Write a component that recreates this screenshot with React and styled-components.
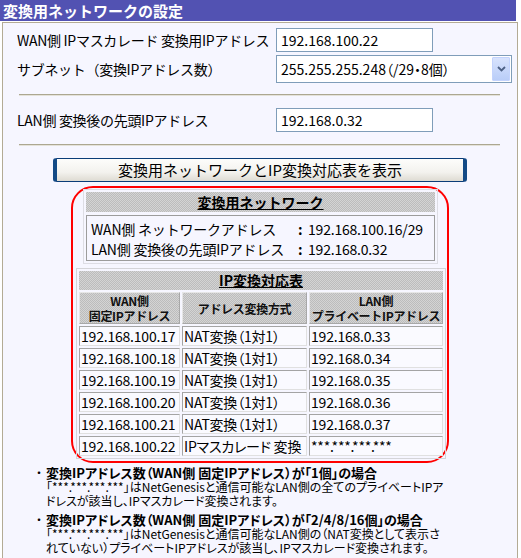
import styled, { createGlobalStyle } from "styled-components";

const GlobalStyle = createGlobalStyle`
  body {
    margin: 0;
    background: #ffffff;
  }
`;

const Page = styled.div`
  width: 521px;
  height: 558px;
  overflow: hidden;
  font-family: "Noto Sans CJK JP", "Noto Sans", sans-serif;
  color: #000;
`;

const Title = styled.h1`
  margin: 0;
  width: 516px;
  height: 21px;
  box-sizing: border-box;
  padding-left: 3px;
  background: #5252b2;
  color: #fff;
  font-size: 15px;
  font-weight: bold;
  line-height: 21px;
`;

const Frame = styled.div`
  margin: 1px 0 0 2px;
  width: 516px;
  height: 540px;
  box-sizing: border-box;
  border: 1px solid #b3ab95;
  border-bottom: none;
  background: #f6f6ff;
  padding-top: 5px;
`;

const FormRow = styled.div`
  display: grid;
  grid-template-columns: 259px auto;
  align-items: center;
  padding-left: 14px;
  margin-top: ${(p) => p.$top || 0}px;
  font-size: 14px;
  white-space: nowrap;
  letter-spacing: -0.3px;
`;

const TextInput = styled.div`
  width: 157px;
  height: 24px;
  box-sizing: border-box;
  border: 1px solid #7f9db9;
  background: #fff;
  padding-left: 4px;
  font-size: 14px;
  line-height: 22px;
  letter-spacing: 0;
`;

const Select = styled.div`
  width: 236px;
  height: 28px;
  box-sizing: border-box;
  border: 1px solid #7f9db9;
  background: #fff;
  display: flex;
  align-items: center;
  justify-content: space-between;
  padding: 0 1px 0 4px;
  font-size: 14px;
  letter-spacing: 0;
  font-feature-settings: "palt";
`;

const DropButton = styled.div`
  width: 18px;
  height: 24px;
  box-sizing: border-box;
  border: 1px solid #c3d3fd;
  border-radius: 1px;
  background: linear-gradient(#d8e3fd, #b9cdf8);
  display: flex;
  align-items: center;
  justify-content: center;
`;

const Separator = styled.hr`
  margin: ${(p) => p.$top}px 0 0 16px;
  width: 481px;
  height: 0;
  border: none;
  border-top: 1px solid #aca791;
  border-bottom: 1px solid #e4e2da;
`;

const ShowButton = styled.button`
  display: block;
  margin: 12px auto 0;
  width: 414px;
  height: 24px;
  box-sizing: border-box;
  border: 1px solid #0a3d78;
  border-left: 4px solid #134a86;
  border-right: 4px solid #134a86;
  border-radius: 3px;
  background: linear-gradient(#fdfdfb, #f3f2ee 60%, #dedbd2);
  font-family: "Noto Sans CJK JP", sans-serif;
  font-size: 15px;
  line-height: 20px;
  color: #000;
  padding: 0;
  cursor: pointer;
`;

const ResultBox = styled.div`
  margin: 4px auto 0;
  width: 378px;
  height: 277px;
  box-sizing: border-box;
  border: 2px solid #ff0000;
  border-radius: 22px;
  padding-top: 1px;
`;

const NetWrap = styled.div`
  margin: 0 9px 0 10px;
  border: 1px solid #dddde4;
  padding: 2px;
`;

const gray = `
  background: repeating-conic-gradient(#bcbcbc 0 25%, #d4d4d4 0 50%) 0 0 / 2px 2px;
`;

const BarHeading = styled.div`
  ${gray}
  height: 20px;
  text-align: center;
  font-size: 14px;
  font-weight: bold;
  line-height: 20px;
  text-decoration: underline;
`;

const InfoBox = styled.div`
  margin-top: 3px;
  border: 1px solid #9c9c9c;
  padding: 3px 4px 1px;
  display: grid;
  grid-template-columns: 207px 10px auto;
  font-size: 14px;
  line-height: 20px;
  white-space: nowrap;
  letter-spacing: -0.2px;
`;

const Colon = styled.span`
  font-weight: bold;
`;

const MapTable = styled.table`
  margin: 4px 0 0 3px;
  width: 370px;
  border: 1px solid #d4d4d8;
  border-spacing: 2px;
  table-layout: fixed;
`;

const Col = styled.col`
  width: ${(p) => p.$w}px;
`;

const TableHeading = styled.th`
  ${gray}
  height: 19px;
  padding: 0;
  font-size: 14px;
  line-height: 19px;
  text-decoration: underline;
`;

const HeadCell = styled.th`
  ${gray}
  height: 32px;
  box-sizing: border-box;
  padding: 0;
  border: 1px solid;
  border-color: #e6e6e6 #a8a8a8 #a8a8a8 #e6e6e6;
  font-size: 12px;
  line-height: 15px;
  color: #111;
  white-space: nowrap;
  letter-spacing: -0.3px;
`;

const Cell = styled.td`
  height: 20px;
  box-sizing: border-box;
  padding: 0 0 0 1px;
  border: 1px solid;
  border-color: #a4a4a4 #e0e0e0 #e0e0e0 #a4a4a4;
  background: #fafaff;
  font-size: 14px;
  line-height: 18px;
  white-space: nowrap;
  overflow: hidden;
  letter-spacing: -0.2px;
  font-feature-settings: "palt";
`;

const Notes = styled.ul`
  list-style: none;
  margin: 2px 0 0 30px;
  padding: 0;
  font-feature-settings: "palt";
`;

const Note = styled.li`
  display: grid;
  grid-template-columns: 13px auto;
  margin-bottom: 4px;
  white-space: nowrap;
`;

const Bullet = styled.span`
  font-size: 12px;
  line-height: 15px;
  font-feature-settings: normal;
`;

const NoteTitle = styled.div`
  font-size: 13px;
  font-weight: bold;
  line-height: 15px;
`;

const NoteBody = styled.div`
  font-size: 12px;
  line-height: 14px;
`;

const Chevron = () => (
  <svg width="9" height="6" viewBox="0 0 9 6">
    <path d="M1 1 L4.5 4.5 L8 1" fill="none" stroke="#4d6185" strokeWidth="1.8" />
  </svg>
);

const rows = [
  ["192.168.100.17", "NAT変換（1対1）", "192.168.0.33"],
  ["192.168.100.18", "NAT変換（1対1）", "192.168.0.34"],
  ["192.168.100.19", "NAT変換（1対1）", "192.168.0.35"],
  ["192.168.100.20", "NAT変換（1対1）", "192.168.0.36"],
  ["192.168.100.21", "NAT変換（1対1）", "192.168.0.37"],
  ["192.168.100.22", "IPマスカレード 変換", "***.***.***.***"],
];

export default function App() {
  return (
    <Page>
      <GlobalStyle />
      <Title>変換用ネットワークの設定</Title>
      <Frame>
        <FormRow>
          <span>WAN側 IPマスカレード 変換用IPアドレス</span>
          <TextInput>192.168.100.22</TextInput>
        </FormRow>
        <FormRow $top={3}>
          <span>サブネット（変換IPアドレス数）</span>
          <Select>
            <span>255.255.255.248（/29・8個）</span>
            <DropButton>
              <Chevron />
            </DropButton>
          </Select>
        </FormRow>
        <Separator $top={11} />
        <FormRow $top={12}>
          <span>LAN側 変換後の先頭IPアドレス</span>
          <TextInput>192.168.0.32</TextInput>
        </FormRow>
        <Separator $top={12} />
        <ShowButton>変換用ネットワークとIP変換対応表を表示</ShowButton>

        <ResultBox>
          <NetWrap>
            <BarHeading>変換用ネットワーク</BarHeading>
            <InfoBox>
              <span>WAN側 ネットワークアドレス</span>
              <Colon>:</Colon>
              <span>192.168.100.16/29</span>
              <span>LAN側 変換後の先頭IPアドレス</span>
              <Colon>:</Colon>
              <span>192.168.0.32</span>
            </InfoBox>
          </NetWrap>

          <MapTable>
            <colgroup>
              <Col $w={101} />
              <Col $w={125} />
              <Col $w={134} />
            </colgroup>
            <thead>
              <tr>
                <TableHeading colSpan={3}>IP変換対応表</TableHeading>
              </tr>
              <tr>
                <HeadCell>
                  WAN側
                  <br />
                  固定IPアドレス
                </HeadCell>
                <HeadCell>アドレス変換方式</HeadCell>
                <HeadCell>
                  LAN側
                  <br />
                  プライベートIPアドレス
                </HeadCell>
              </tr>
            </thead>
            <tbody>
              {rows.map((r) => (
                <tr key={r[0]}>
                  {r.map((c, i) => (
                    <Cell key={i}>{c}</Cell>
                  ))}
                </tr>
              ))}
            </tbody>
          </MapTable>
        </ResultBox>

        <Notes>
          <Note>
            <Bullet>・</Bullet>
            <div>
              <NoteTitle>変換IPアドレス数（WAN側 固定IPアドレス）が「1個」の場合</NoteTitle>
              <NoteBody>
                「***.***.***.***」はNetGenesisと通信可能なLAN側の全てのプライベートIPア
                <br />
                ドレスが該当し、IPマスカレード変換されます。
              </NoteBody>
            </div>
          </Note>
          <Note>
            <Bullet>・</Bullet>
            <div>
              <NoteTitle>変換IPアドレス数（WAN側 固定IPアドレス）が「2/4/8/16個」の場合</NoteTitle>
              <NoteBody>
                「***.***.***.***」はNetGenesisと通信可能なLAN側の（NAT変換として表示さ
                <br />
                れていない）プライベートIPアドレスが該当し、IPマスカレード変換されます。
              </NoteBody>
            </div>
          </Note>
        </Notes>
      </Frame>
    </Page>
  );
}
